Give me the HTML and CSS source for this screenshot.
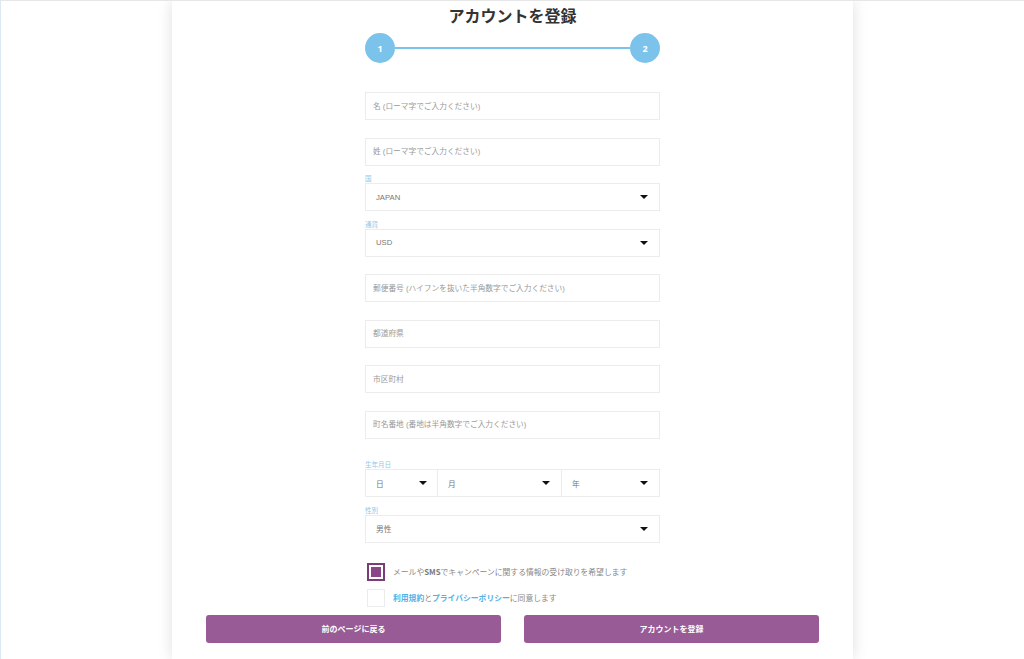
FILE: index.html
```html
<!DOCTYPE html>
<html lang="ja">
<head>
    <meta charset="UTF-8">
    <meta name="viewport" content="width=device-width, initial-scale=1.0">
    <title>アカウントを登録</title>

    <link rel="stylesheet" href="styles.css">
</head>
<body>
    <div class="page">
        <main class="card">
            <h1 class="title">アカウントを登録</h1>

            <div class="steps">
                <span class="step">1</span>
                <span class="step-line"></span>
                <span class="step">2</span>
            </div>

            <form class="form">
                <div class="field">
                    <span class="field-label"></span>
                    <input class="text-input" type="text" placeholder="名 (ローマ字でご入力ください)">
                </div>
                <div class="field">
                    <span class="field-label"></span>
                    <input class="text-input" type="text" placeholder="姓 (ローマ字でご入力ください)">
                </div>
                <div class="field">
                    <span class="field-label">国</span>
                    <div class="select"><span>JAPAN</span><i class="caret"></i></div>
                </div>
                <div class="field">
                    <span class="field-label">通貨</span>
                    <div class="select"><span>USD</span><i class="caret"></i></div>
                </div>
                <div class="field">
                    <span class="field-label"></span>
                    <input class="text-input" type="text" placeholder="郵便番号 (ハイフンを抜いた半角数字でご入力ください)">
                </div>
                <div class="field">
                    <span class="field-label"></span>
                    <input class="text-input" type="text" placeholder="都道府県">
                </div>
                <div class="field">
                    <span class="field-label"></span>
                    <input class="text-input" type="text" placeholder="市区町村">
                </div>
                <div class="field">
                    <span class="field-label"></span>
                    <input class="text-input" type="text" placeholder="町名番地 (番地は半角数字でご入力ください)">
                </div>

                <div class="field field-birth">
                    <span class="field-label">生年月日</span>
                    <div class="date-row">
                        <div class="select day"><span>日</span><i class="caret"></i></div>
                        <div class="select month"><span>月</span><i class="caret"></i></div>
                        <div class="select year"><span>年</span><i class="caret"></i></div>
                    </div>
                </div>
                <div class="field">
                    <span class="field-label">性別</span>
                    <div class="select"><span>男性</span><i class="caret"></i></div>
                </div>

                <label class="check-row first">
                    <span class="checkbox checked"><span class="check-fill"></span></span>
                    <span class="check-text">メールや<b>SMS</b>でキャンペーンに関する情報の受け取りを希望します</span>
                </label>
                <label class="check-row">
                    <span class="checkbox"></span>
                    <span class="check-text"><a href="#">利用規約</a>と<a href="#">プライバシーポリシー</a>に同意します</span>
                </label>
            </form>

            <div class="actions">
                <button class="btn" type="button">前のページに戻る</button>
                <button class="btn" type="button">アカウントを登録</button>
            </div>
        </main>
    </div>
</body>
</html>
```

FILE: styles.css
```css
/* VARIABLES */

:root {
    --purple: #985b96;
    --dark-purple: #7a3c79;
    --sky: #7cc3ec;
    --link: #52b1e6;
    --border: #ececec;
    --text: #8a8a8a;
}

/* BASE */

html, body {
    margin: 0;
    height: 100%;
}

body {
    font-family: "Noto Sans CJK JP", "Noto Sans", sans-serif;
    color: var(--text);
    background: #fff;
}

.page {
    height: 659px;
    box-sizing: border-box;
    border-top: 1px solid #e6e6e6;
    border-left: 1px solid #dde9f2;
    overflow: hidden;
}

/* CARD */

.card {
    width: 681px;
    height: 100%;
    margin: 0 auto;
    background: #fff;
    box-shadow: 0 0 14px rgba(0, 0, 0, 0.13);
}

.title {
    margin: 0;
    padding-top: 4px;
    font-size: 16px;
    line-height: 20px;
    font-weight: 700;
    color: #333;
    text-align: center;
}

/* STEPS */

.steps {
    display: flex;
    align-items: center;
    width: 295px;
    margin: 8px auto 0;
}

.step {
    display: flex;
    align-items: center;
    justify-content: center;
    width: 30px;
    height: 30px;
    border-radius: 50%;
    background: var(--sky);
    color: #fff;
    font-family: "Open Sans", sans-serif;
    font-size: 9px;
    font-weight: 700;
}

.step-line {
    flex: 1;
    height: 2px;
    background: var(--sky);
}

/* FORM */

.form {
    width: 295px;
    margin: 19px auto 0;
}

.field {
    display: flex;
    flex-direction: column;
    margin-bottom: 7.5px;
}

.field-label {
    height: 10px;
    font-size: 6.5px;
    line-height: 10px;
    color: #8fc9ea;
}

.text-input,
.select {
    box-sizing: border-box;
    width: 100%;
    height: 28px;
    border: 1px solid var(--border);
    background: #fff;
    font-family: "Liberation Sans", "Noto Sans CJK JP", sans-serif;
    font-size: 7.7px;
    color: var(--text);
}

.text-input {
    padding: 0 7px;
    outline: none;
}

.text-input::placeholder {
    color: #999;
}

.select {
    display: flex;
    align-items: center;
    justify-content: space-between;
    padding: 0 11px 0 10px;
    color: #777;
}

.caret {
    width: 0;
    height: 0;
    border-left: 4px solid transparent;
    border-right: 4px solid transparent;
    border-top: 4px solid #111;
}

.field-birth {
    margin-top: 20.5px;
}

.date-row {
    display: flex;
}

.date-row .select + .select {
    border-left: none;
}

.date-row .day {
    width: 73px;
    padding-right: 10px;
}

.date-row .month {
    width: 124px;
}

.date-row .year {
    width: 98px;
}

/* CHECKBOXES */

.check-row {
    display: flex;
    align-items: center;
    gap: 8px;
    height: 18px;
    margin: 0 0 8px 2px;
    cursor: pointer;
}

.check-row.first {
    margin-top: 20px;
}

.checkbox {
    box-sizing: border-box;
    width: 18px;
    height: 18px;
    border: 1px solid var(--border);
    background: #fff;
}

.checkbox.checked {
    border: 2px solid var(--dark-purple);
    padding: 2px;
}

.check-fill {
    display: block;
    width: 10px;
    height: 10px;
    background: #8a4689;
}

.check-text {
    font-size: 7.8px;
    color: #888;
}

.check-text b {
    font-weight: 700;
    color: #7a7a7a;
}

.check-text a {
    color: var(--link);
    font-weight: 700;
    text-decoration: none;
}

/* BUTTONS */

.actions {
    display: flex;
    justify-content: space-between;
    width: 613px;
    margin: 0 auto;
}

.btn {
    width: 295px;
    height: 28px;
    border: none;
    border-radius: 3px;
    background: var(--purple);
    color: #fff;
    font-family: inherit;
    font-size: 8px;
    font-weight: 700;
    cursor: pointer;
}
```
